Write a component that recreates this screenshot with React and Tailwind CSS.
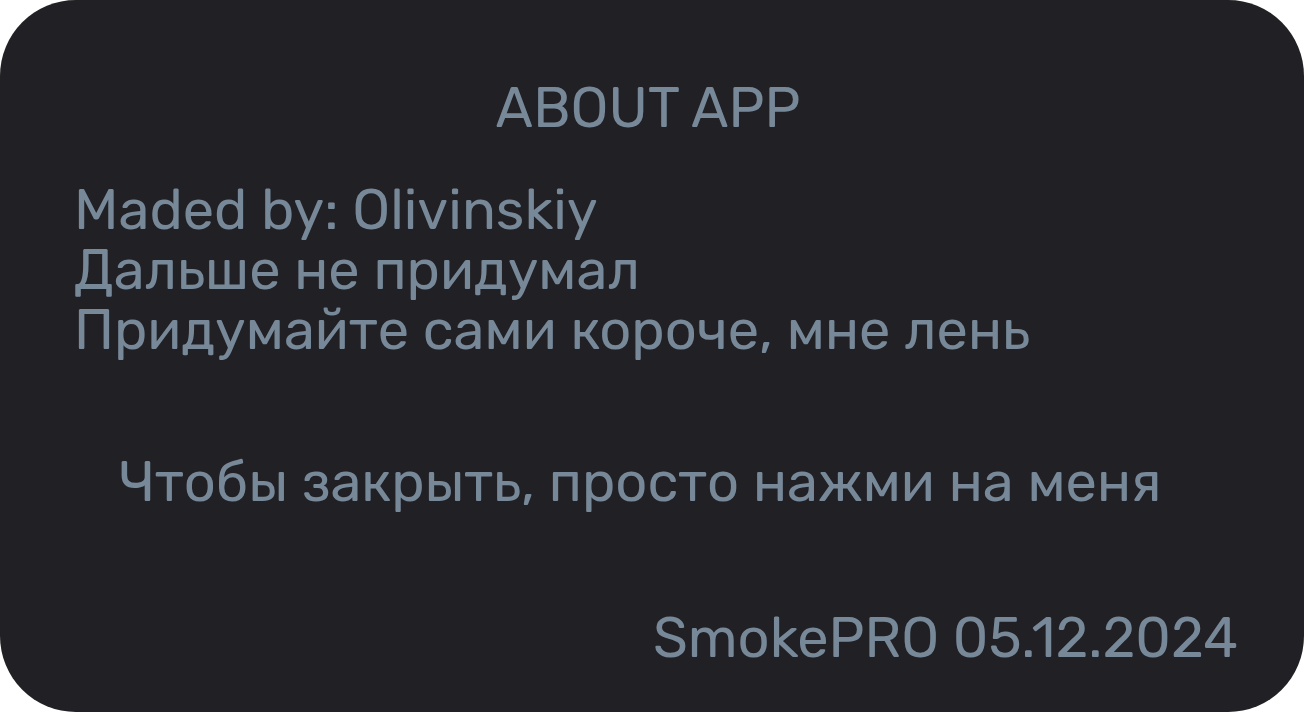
import React from 'react';

function App() {
    return (
        <div className="w-[1304px] h-[712px] bg-white">
            <div
                className="w-full h-full bg-[#212024] rounded-[76px] text-[#778899] flex flex-col"
                style={{ fontFamily: 'Rubik, Roboto, "Noto Sans", sans-serif' }}
            >
                <h1 className="text-center text-[56px] leading-[60px] pt-[78px] pr-[8px]">ABOUT APP</h1>

                <div className="pl-[74px] mt-[42px] text-[56px] leading-[60px]">
                    <p>Maded by: Olivinskiy</p>
                    <p>Дальше не придумал</p>
                    <p>Придумайте сами короче, мне лень</p>
                </div>

                <p className="text-center text-[56px] leading-[60px] mt-[92px] pr-[24px]">
                    Чтобы закрыть, просто нажми на меня
                </p>

                <p className="text-right text-[56px] leading-[60px] mt-[96px] pr-[66px]">
                    SmokePRO 05.12.2024
                </p>
            </div>
        </div>
    );
}

export default App;
